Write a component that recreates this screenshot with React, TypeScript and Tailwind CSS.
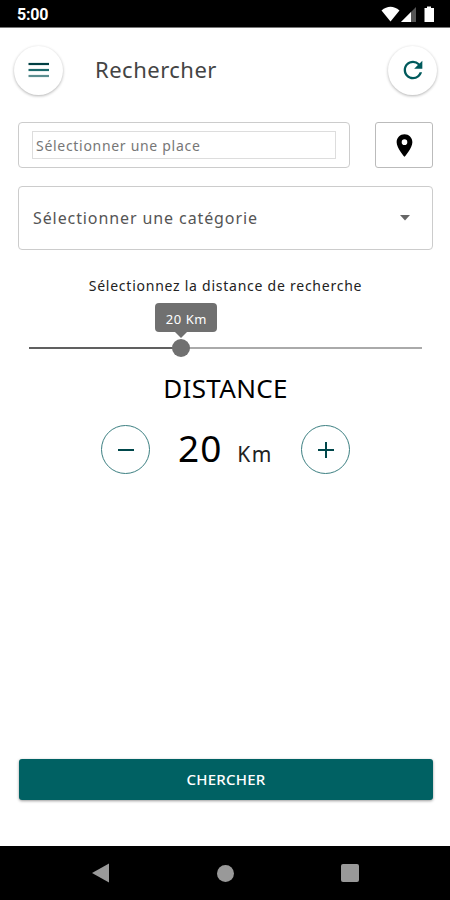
import { useState } from "react";

const MIN = 1;
const MAX = 50;

export default function App() {
  const [place, setPlace] = useState("");
  const [distance, setDistance] = useState(20);

  const percent = ((distance - MIN) / (MAX - MIN)) * 100;

  return (
    <div className="flex h-[900px] w-[450px] flex-col overflow-hidden bg-white font-['Noto_Sans',sans-serif] text-black">
      <StatusBar />

      <header className="mt-[17px] flex h-[50px] items-center pr-[13px] pl-[14px]">
        <button className="flex size-[49px] items-center justify-center rounded-full bg-white shadow-[0_1px_3px_rgba(0,0,0,0.3)]">
          <svg width="22" height="16" viewBox="0 0 22 16">
            <path d="M0.5 2h20.500" stroke="#003f43" strokeWidth="2.2" />
            <path d="M0.5 8h20.500" stroke="#1c6a6c" strokeWidth="2.2" />
            <path d="M0.5 14h20.500" stroke="#5b8e90" strokeWidth="2.2" />
          </svg>
        </button>
        <h1 className="ml-8 flex-1 pb-0.5 text-[22px] leading-[30px] tracking-[0.5px] text-[#444]">Rechercher</h1>
        <button className="flex size-[49px] items-center justify-center rounded-full bg-white shadow-[0_1px_3px_rgba(0,0,0,0.3)]">
          <svg width="28" height="28" viewBox="0 0 24 24" fill="#005a5c">
            <path d="M17.65 6.35A7.958 7.958 0 0 0 12 4c-4.42 0-7.99 3.58-7.99 8s3.57 8 7.99 8c3.73 0 6.84-2.55 7.73-6h-2.08A5.99 5.99 0 0 1 12 18c-3.31 0-6-2.69-6-6s2.69-6 6-6c1.66 0 3.14.69 4.22 1.78L13 11h7V4l-2.35 2.35z" />
          </svg>
        </button>
      </header>

      <main className="flex flex-1 flex-col pt-[27px] pr-[17px] pl-[18px]">
        <div className="flex h-[46px] justify-between">
          <div className="w-[332px] rounded-[4px] border border-[#ccc] px-[13px] py-2">
            <input
              value={place}
              onChange={(e) => setPlace(e.target.value)}
              placeholder="Sélectionner une place"
              className="block h-7 w-full border border-[#ddd] px-[3px] text-sm tracking-[0.7px] outline-none placeholder:text-[#777]"
            />
          </div>
          <button className="flex w-[58px] items-center justify-center rounded-[3px] border border-[#bbb]">
            <svg width="27" height="27" viewBox="0 0 24 24">
              <path d="M12 2C8.13 2 5 5.13 5 9c0 5.25 7 13 7 13s7-7.75 7-13c0-3.87-3.13-7-7-7zm0 9.5a2.5 2.5 0 0 1 0-5 2.5 2.5 0 0 1 0 5z" />
            </svg>
          </button>
        </div>

        <button className="mt-[18px] flex h-16 items-center justify-between rounded-[4px] border border-[#ccc] pr-[21px] pl-[14px]">
          <span className="text-base tracking-[0.9px] text-[#555]">Sélectionner une catégorie</span>
          <svg width="12" height="6" viewBox="0 0 12 6" fill="#666">
            <path d="M1 0h10L6 5.5z" />
          </svg>
        </button>

        <p className="mt-[26px] text-center text-sm leading-5 tracking-[0.75px] text-[#222]">
          Sélectionnez la distance de recherche
        </p>

        <Slider value={distance} percent={percent} />

        <h2 className="mt-[14px] text-center text-[26px] leading-8 tracking-[0.3px]">DISTANCE</h2>

        <div className="mt-[21px] flex h-[49px] items-center px-[83px]">
          <RoundButton onClick={() => setDistance(Math.max(MIN, distance - 1))}>
            <path d="M4 12h16" />
          </RoundButton>
          <div className="flex flex-1 items-baseline justify-center gap-[15px] pb-[3px]">
            <span className="text-[37px] leading-[46px] tracking-[1px]">{distance}</span>
            <span className="text-[21px] tracking-[1.5px] text-[#222]">Km</span>
          </div>
          <RoundButton onClick={() => setDistance(Math.min(MAX, distance + 1))}>
            <path d="M4 12h16M12 4v16" />
          </RoundButton>
        </div>

        <button className="mt-auto mb-[46px] ml-px h-[41px] rounded-[3px] bg-[#006163] text-[15px] font-medium tracking-[0.2px] text-white shadow-[0_1px_3px_rgba(0,0,0,0.4)]">
          CHERCHER
        </button>
      </main>

      <NavBar />
    </div>
  );
}

function StatusBar() {
  return (
    <div className="flex h-7 shrink-0 items-center justify-between border-b border-[#777] bg-black pr-[15px] pl-[17px]">
      <span className="pt-[3px] font-[Roboto,sans-serif] text-base leading-6 font-bold tracking-[-0.2px] text-white">5:00</span>
      <svg width="54" height="17" viewBox="0 0 54 17" className="mt-px">
        <path d="M0.5 4.5Q9.5-3 18.500 4.5L9.500 15.500z" fill="#fff" />
        <path d="M35 1v15H20z" fill="#555" />
        <path d="M30 6v10H20z" fill="#fff" />
        <path d="M46 0.500h4v1.500h3v14h-9.500V2H46z" fill="#fff" />
      </svg>
    </div>
  );
}

function Slider({ value, percent }: { value: number; percent: number }) {
  return (
    <div className="mt-[42px] ml-[11px] flex h-5 w-[393px] items-center">
      <div className="relative h-0.5 w-full bg-[#aaa]">
        <div className="h-0.5 bg-[#606060]" style={{ width: `${percent}%` }} />
        <div className="absolute top-1/2 size-[18px] -translate-1/2 rounded-full bg-[#707070]" style={{ left: `${percent}%` }}>
          <div className="absolute bottom-[25px] -left-[17px] flex h-[29px] w-[62px] items-center justify-center rounded-[4px] bg-[#707070] pt-1 text-[13px] tracking-[0.6px] whitespace-nowrap text-white">
            {value} Km
            <svg width="12" height="6" viewBox="0 0 12 6" className="absolute top-full left-5" fill="#707070">
              <path d="M0 0h12L6 6z" />
            </svg>
          </div>
        </div>
      </div>
    </div>
  );
}

function RoundButton({ onClick, children }: { onClick: () => void; children: React.ReactNode }) {
  return (
    <button onClick={onClick} className="flex size-[49px] items-center justify-center rounded-full border border-[#3d8082]">
      <svg width="24" height="24" viewBox="0 0 24 24" stroke="#00474b" strokeWidth="2">
        {children}
      </svg>
    </button>
  );
}

function NavBar() {
  return (
    <nav className="flex h-[54px] shrink-0 items-center justify-between bg-black pr-[91px] pl-[92px]">
      <svg width="17" height="20" viewBox="0 0 17 20" fill="#999">
        <path d="M17 0.500v19L0 10z" />
      </svg>
      <div className="size-[17px] rounded-full bg-[#999]" />
      <div className="size-[18px] rounded-[2px] bg-[#999]" />
    </nav>
  );
}
